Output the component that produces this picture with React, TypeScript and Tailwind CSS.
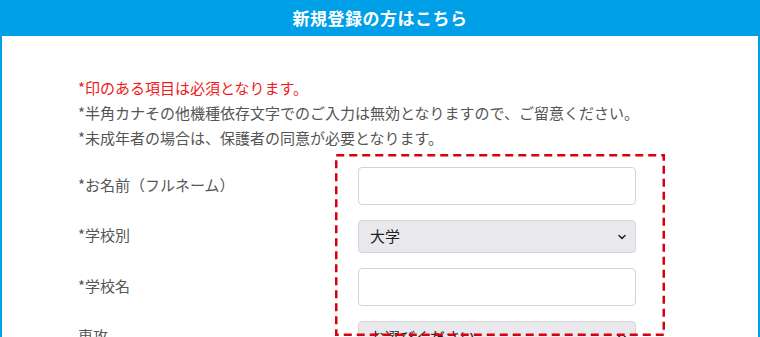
import { ChevronDown } from "lucide-react";

const font = { fontFamily: '"Noto Sans CJK JP", "Noto Sans", sans-serif' };

function TextField() {
  return <input type="text" className="w-[278px] h-[38px] rounded-[4px] border border-[#d3d3d3] bg-white px-3" />;
}

function SelectField({ value }: { value: string }) {
  return (
    <div className="relative w-[278px] h-[33px]">
      <select
        defaultValue={value}
        className="appearance-none w-full h-full rounded-[4px] border border-[#d6d6d9] bg-[#e9e9ed] pl-[11px] text-[15px] text-[#222]"
      >
        <option>{value}</option>
      </select>
      <ChevronDown className="absolute right-[8px] top-[11px] w-[12px] h-[12px] text-[#222] pointer-events-none" strokeWidth={3} />
    </div>
  );
}

export default function App() {
  const rows = [
    { label: "*お名前（フルネーム）", field: <TextField /> },
    { label: "*学校別", field: <SelectField value="大学" /> },
    { label: "*学校名", field: <TextField /> },
    { label: "専攻", field: <SelectField value="お選びください" /> },
  ];

  return (
    <div className="relative w-[760px] h-[337px] overflow-hidden bg-white" style={font}>
      {/* Header */}
      <div className="h-[36px] bg-[#00a0e9] flex items-center justify-center">
        <h2 className="text-white font-bold text-[17px] tracking-[0.5px]">新規登録の方はこちら</h2>
      </div>

      <div className="border-x-2 border-[#00a0e9] h-[301px] pl-[76px] pt-[39px]">
        {/* Notes */}
        <div className="text-[15px] leading-[25px] text-[#555]">
          <p className="text-[#f01818]">*印のある項目は必須となります。</p>
          <p>*半角カナその他機種依存文字でのご入力は無効となりますので、ご留意ください。</p>
          <p>*未成年者の場合は、保護者の同意が必要となります。</p>
        </div>

        {/* Form */}
        <div className="mt-[17px] flex flex-col gap-[15px]">
          {rows.map((row) => (
            <div key={row.label} className="flex items-center">
              <span className="w-[280px] text-[15px] leading-[20px] text-[#555] -mt-[3px]">{row.label}</span>
              {row.field}
            </div>
          ))}
        </div>
      </div>

      {/* Annotation box */}
      <svg className="absolute left-[335px] top-[154px]" width="330" height="182" viewBox="0 0 330 182">
        <rect x="1.25" y="1.25" width="327.5" height="179.5" fill="none" stroke="#d7000f" strokeWidth="2.5" strokeDasharray="8 5" />
      </svg>
    </div>
  );
}
